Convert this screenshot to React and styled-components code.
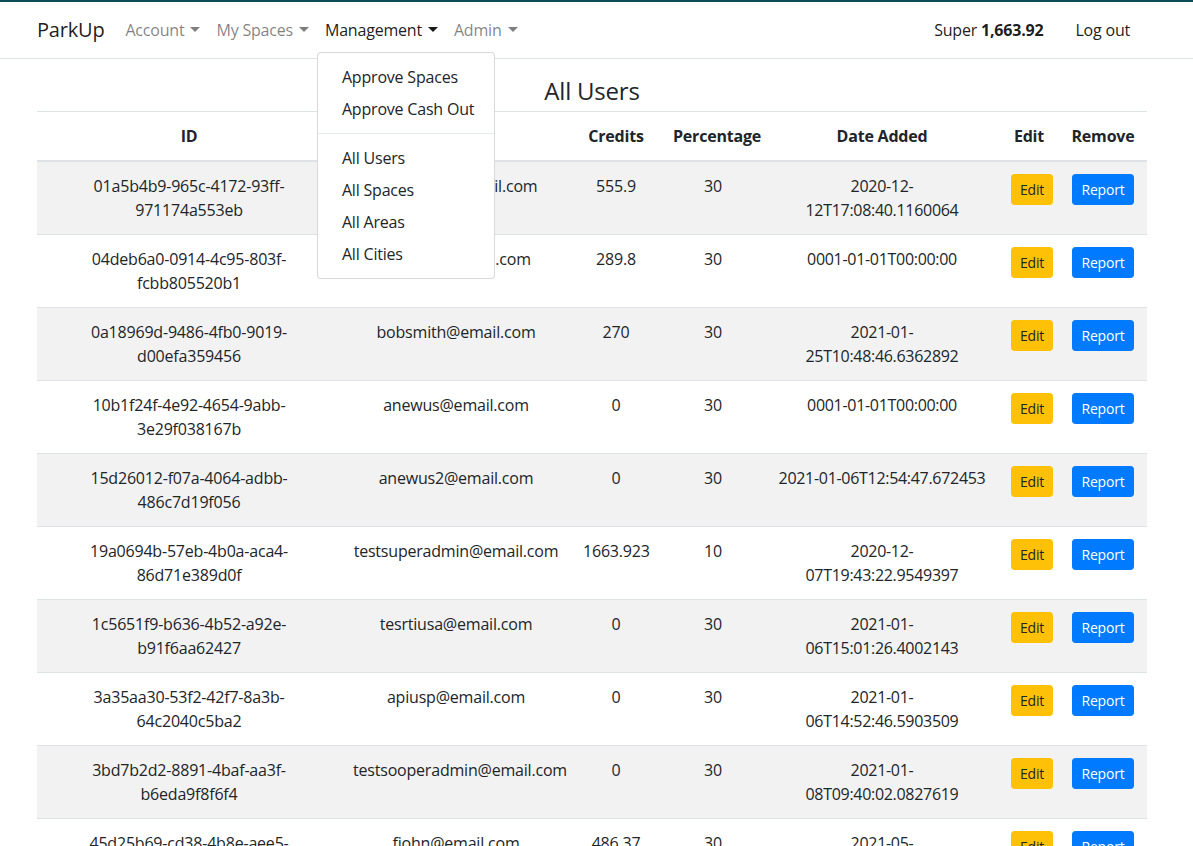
import React from "react";
import styled, { createGlobalStyle, css } from "styled-components";

const GlobalStyle = createGlobalStyle`
  * { box-sizing: border-box; }
  body {
    margin: 0;
    font-family: "Segoe UI", "Open Sans", "Noto Sans", sans-serif;
    font-size: 16px;
    line-height: 1.5;
    letter-spacing: -0.2px;
    color: #212529;
    background: #fff;
  }
`;

const TopStripe = styled.div`
  height: 2px;
  background: #0c4b58;
`;

const NavBar = styled.nav`
  border-bottom: 1px solid #dee2e6;
  padding: 8px 0;
`;

const NavInner = styled.div`
  width: 1110px;
  margin-left: 37px;
  display: flex;
  align-items: center;
`;

const Brand = styled.a`
  font-size: 20px;
  line-height: 30px;
  padding: 5px 0;
  margin-right: 13px;
  color: rgba(0, 0, 0, 0.9);
  text-decoration: none;
`;

const NavList = styled.ul`
  list-style: none;
  display: flex;
  margin: 0;
  padding: 0;
  ${(p) => p.$right && css`margin-left: auto; margin-right: 9px;`}
`;

const NavItem = styled.li`
  position: relative;
`;

const NavLink = styled.a`
  display: block;
  padding: 8px;
  line-height: 24px;
  color: ${(p) => (p.$active ? "rgba(0, 0, 0, 0.9)" : "rgba(0, 0, 0, 0.5)")};
  text-decoration: none;
  white-space: nowrap;
  ${(p) =>
    p.$caret &&
    css`
      &::after {
        content: "";
        display: inline-block;
        margin-left: 6px;
        vertical-align: 4px;
        border-top: 5px solid;
        border-right: 5px solid transparent;
        border-left: 5px solid transparent;
      }
    `}
`;

const UserText = styled.span`
  display: block;
  padding: 8px;
  line-height: 24px;
  margin-right: 16px;
  color: rgba(0, 0, 0, 0.9);
  b { font-weight: 700; }
`;

const Dropdown = styled.div`
  position: absolute;
  top: calc(100% + 2px);
  left: 0;
  z-index: 10;
  width: 178px;
  padding: 8px 0;
  background: #fff;
  border: 1px solid rgba(0, 0, 0, 0.15);
  border-radius: 4px;
`;

const DropdownItem = styled.a`
  display: block;
  padding: 4px 24px;
  line-height: 24px;
  color: #212529;
  text-decoration: none;
  white-space: nowrap;
`;

const DropdownDivider = styled.div`
  height: 0;
  margin: 8px 0;
  border-top: 1px solid #e9ecef;
`;

const Main = styled.main`
  width: 1110px;
  margin-left: 37px;
`;

const Title = styled.h4`
  margin: 17px 0 6px;
  font-size: 24px;
  font-weight: 500;
  line-height: 29px;
  text-align: center;
`;

const Table = styled.table`
  width: 100%;
  table-layout: fixed;
  border-collapse: collapse;
  text-align: center;
`;

const Th = styled.th`
  padding: 12px;
  line-height: 24px;
  font-weight: 700;
  vertical-align: bottom;
  border-top: 1px solid #dee2e6;
  border-bottom: 2px solid #dee2e6;
`;

const Row = styled.tr`
  &:nth-of-type(odd) {
    background: rgba(0, 0, 0, 0.05);
  }
`;

const Td = styled.td`
  padding: ${(p) => (p.$compact ? "12px 11px" : "12px")};
  letter-spacing: ${(p) => (p.$compact ? "-0.3px" : "inherit")};
  line-height: 24px;
  vertical-align: top;
  border-top: 1px solid #dee2e6;
  height: 73px;
`;

const Button = styled.button`
  font-family: inherit;
  font-size: 14px;
  line-height: 21px;
  letter-spacing: -0.2px;
  padding: 4px 8px;
  border: 1px solid transparent;
  border-radius: 3.2px;
  cursor: pointer;
  ${(p) =>
    p.$variant === "warning"
      ? css`
          background: #ffc107;
          border-color: #ffc107;
          color: #212529;
        `
      : css`
          background: #007bff;
          border-color: #007bff;
          color: #fff;
        `}
`;

const columns = [
  { label: "ID", width: 304 },
  { label: "Email", width: 230 },
  { label: "Credits", width: 90 },
  { label: "Percentage", width: 104 },
  { label: "Date Added", width: 234 },
  { label: "Edit", width: 60 },
  { label: "Remove", width: 88 },
];

const users = [
  ["01a5b4b9-965c-4172-93ff-971174a553eb", "johnsmith@email.com", "555.9", "30", "2020-12-12T17:08:40.1160064"],
  ["04deb6a0-0914-4c95-803f-fcbb805520b1", "tester12@email.com", "289.8", "30", "0001-01-01T00:00:00"],
  ["0a18969d-9486-4fb0-9019-d00efa359456", "bobsmith@email.com", "270", "30", "2021-01-25T10:48:46.6362892"],
  ["10b1f24f-4e92-4654-9abb-3e29f038167b", "anewus@email.com", "0", "30", "0001-01-01T00:00:00"],
  ["15d26012-f07a-4064-adbb-486c7d19f056", "anewus2@email.com", "0", "30", "2021-01-06T12:54:47.672453"],
  ["19a0694b-57eb-4b0a-aca4-86d71e389d0f", "testsuperadmin@email.com", "1663.923", "10", "2020-12-07T19:43:22.9549397"],
  ["1c5651f9-b636-4b52-a92e-b91f6aa62427", "tesrtiusa@email.com", "0", "30", "2021-01-06T15:01:26.4002143"],
  ["3a35aa30-53f2-42f7-8a3b-64c2040c5ba2", "apiusp@email.com", "0", "30", "2021-01-06T14:52:46.5903509"],
  ["3bd7b2d2-8891-4baf-aa3f-b6eda9f8f6f4", "testsooperadmin@email.com", "0", "30", "2021-01-08T09:40:02.0827619"],
  ["45d25b69-cd38-4b8e-aee5-2f1c7a90b3de", "fjohn@email.com", "486.37", "30", "2021-05-03T11:22:10.4418260"],
];

const App = () => {
  return (
    <>
      <GlobalStyle />
      <TopStripe />
      <NavBar>
        <NavInner>
          <Brand href="#">ParkUp</Brand>
          <NavList>
            <NavItem>
              <NavLink href="#" $caret>Account</NavLink>
            </NavItem>
            <NavItem>
              <NavLink href="#" $caret>My Spaces</NavLink>
            </NavItem>
            <NavItem>
              <NavLink href="#" $caret $active>Management</NavLink>
              <Dropdown>
                <DropdownItem href="#">Approve Spaces</DropdownItem>
                <DropdownItem href="#">Approve Cash Out</DropdownItem>
                <DropdownDivider />
                <DropdownItem href="#">All Users</DropdownItem>
                <DropdownItem href="#">All Spaces</DropdownItem>
                <DropdownItem href="#">All Areas</DropdownItem>
                <DropdownItem href="#">All Cities</DropdownItem>
              </Dropdown>
            </NavItem>
            <NavItem>
              <NavLink href="#" $caret>Admin</NavLink>
            </NavItem>
          </NavList>
          <NavList $right>
            <NavItem>
              <UserText>Super <b>1,663.92</b></UserText>
            </NavItem>
            <NavItem>
              <NavLink href="#" $active>Log out</NavLink>
            </NavItem>
          </NavList>
        </NavInner>
      </NavBar>

      <Main>
        <Title>All Users</Title>
        <Table>
          <colgroup>
            {columns.map((c) => (
              <col key={c.label} style={{ width: c.width }} />
            ))}
          </colgroup>
          <thead>
            <tr>
              {columns.map((c) => (
                <Th key={c.label}>{c.label}</Th>
              ))}
            </tr>
          </thead>
          <tbody>
            {users.map((u) => (
              <Row key={u[0]}>
                <Td>{u[0]}</Td>
                <Td>{u[1]}</Td>
                <Td>{u[2]}</Td>
                <Td>{u[3]}</Td>
                <Td $compact>{u[4]}</Td>
                <Td>
                  <Button $variant="warning">Edit</Button>
                </Td>
                <Td>
                  <Button $variant="primary">Report</Button>
                </Td>
              </Row>
            ))}
          </tbody>
        </Table>
      </Main>
    </>
  );
};

export default App;
